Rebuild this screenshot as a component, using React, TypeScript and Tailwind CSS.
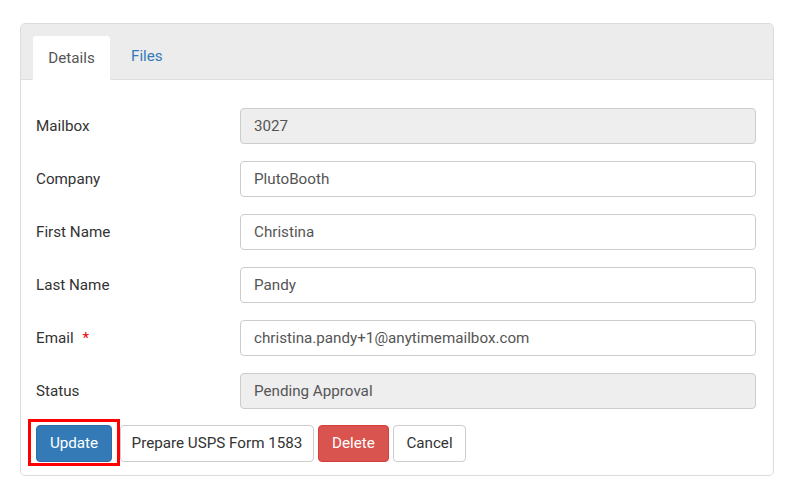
import React from 'react';

type Field = {
  label: string;
  value: string;
  disabled?: boolean;
  required?: boolean;
};

const fields: Field[] = [
  { label: 'Mailbox', value: '3027', disabled: true },
  { label: 'Company', value: 'PlutoBooth' },
  { label: 'First Name', value: 'Christina' },
  { label: 'Last Name', value: 'Pandy' },
  { label: 'Email', value: 'christina.pandy+1@anytimemailbox.com', required: true },
  { label: 'Status', value: 'Pending Approval', disabled: true },
];

export default function App() {
  return (
    <div
      className="w-[790px] h-[494px] bg-white pt-[23px] pl-[20px] text-[15.2px] text-[#333]"
      style={{ fontFamily: 'Roboto, "Liberation Sans", sans-serif' }}
    >
      <div className="w-[754px] h-[453px] rounded-[5px] border border-[#dcdcdc] overflow-hidden flex flex-col">
        {/* Tabs */}
        <div className="h-[56px] bg-[#ececec] border-b border-[#dddddd] flex items-end pl-[11px] shrink-0">
          <div className="h-[45px] w-[79px] -mb-px bg-white rounded-t-[4px] border border-b-0 border-[#ececec] flex items-center justify-center text-[#555]">
            Details
          </div>
          <div className="h-[45px] px-[20px] flex items-center text-[#337ab7]">Files</div>
        </div>

        {/* Form */}
        <div className="pt-[28px] pl-[15px] pr-[17px] flex flex-col gap-[17px]">
          {fields.map((f) => (
            <div key={f.label} className="flex items-center h-[36px]">
              <div className="w-[204px] shrink-0 flex items-center">
                <span>{f.label}</span>
                {f.required && <span className="ml-[9px] text-[#ee0000]">*</span>}
              </div>
              <div
                className={`flex-1 h-[36px] rounded-[4px] border border-[#cccccc] px-[13px] flex items-center text-[#555] ${
                  f.disabled ? 'bg-[#eeeeee]' : 'bg-white'
                }`}
              >
                {f.value}
              </div>
            </div>
          ))}
        </div>

        {/* Actions */}
        <div className="pt-[16px] pl-[15px] flex items-center">
          <div className="relative mr-[8px]">
            <button className="w-[76px] h-[37px] rounded-[4px] bg-[#337ab7] border border-[#2e6da4] text-white">
              Update
            </button>
            <div className="absolute left-[-8px] right-[-8px] top-[-6px] bottom-[-4px] border-[3px] border-[#ff0000] pointer-events-none" />
          </div>
          <button className="w-[194px] h-[37px] rounded-[4px] bg-white border border-[#cccccc] text-[#333] mr-[4px]">
            Prepare USPS Form 1583
          </button>
          <button className="w-[71px] h-[37px] rounded-[4px] bg-[#d9534f] border border-[#d43f3a] text-white mr-[4px]">
            Delete
          </button>
          <button className="w-[73px] h-[37px] rounded-[4px] bg-white border border-[#cccccc] text-[#333]">
            Cancel
          </button>
        </div>
      </div>
    </div>
  );
}
